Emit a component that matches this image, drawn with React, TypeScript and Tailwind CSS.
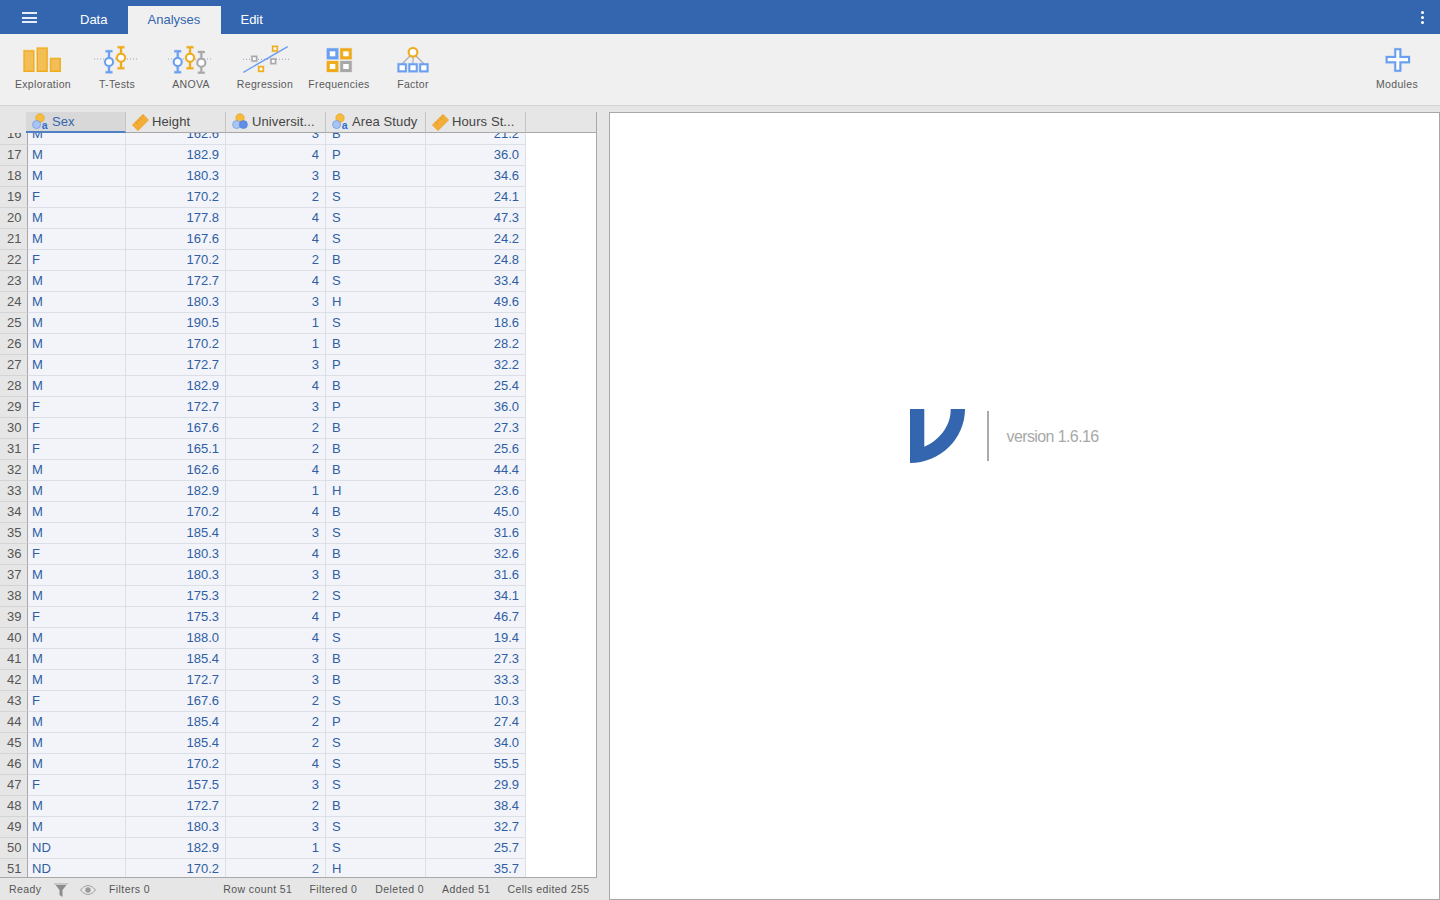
import React from "react";

const data = `16 M 162.6 3 B 21.2
17 M 182.9 4 P 36.0
18 M 180.3 3 B 34.6
19 F 170.2 2 S 24.1
20 M 177.8 4 S 47.3
21 M 167.6 4 S 24.2
22 F 170.2 2 B 24.8
23 M 172.7 4 S 33.4
24 M 180.3 3 H 49.6
25 M 190.5 1 S 18.6
26 M 170.2 1 B 28.2
27 M 172.7 3 P 32.2
28 M 182.9 4 B 25.4
29 F 172.7 3 P 36.0
30 F 167.6 2 B 27.3
31 F 165.1 2 B 25.6
32 M 162.6 4 B 44.4
33 M 182.9 1 H 23.6
34 M 170.2 4 B 45.0
35 M 185.4 3 S 31.6
36 F 180.3 4 B 32.6
37 M 180.3 3 B 31.6
38 M 175.3 2 S 34.1
39 F 175.3 4 P 46.7
40 M 188.0 4 S 19.4
41 M 185.4 3 B 27.3
42 M 172.7 3 B 33.3
43 F 167.6 2 S 10.3
44 M 185.4 2 P 27.4
45 M 185.4 2 S 34.0
46 M 170.2 4 S 55.5
47 F 157.5 3 S 29.9
48 M 172.7 2 B 38.4
49 M 180.3 3 S 32.7
50 ND 182.9 1 S 25.7
51 ND 170.2 2 H 35.7`
  .split("\n")
  .map((l) => l.split(" "));

const B = "#6a9ff0";
const Y = "#efab1a";
const G = "#a8a8a8";

function Pin({ x, y, top, bottom, color }: { x: number; y: number; top: number; bottom: number; color: string }) {
  const d = `M${x - 3.5} ${top}h7M${x - 3.5} ${bottom}h7M${x} ${top}V${y - 3.5}M${x} ${y + 3.5}V${bottom}`;
  return (
    <g fill="none">
      <path d={d} stroke={color} strokeWidth="3.4" opacity="0.22" />
      <circle cx={x} cy={y} r="4" stroke={color} strokeWidth="3" opacity="0.2" />
      <path d={d} stroke={color} strokeWidth="2" />
      <circle cx={x} cy={y} r="4" fill="#fff" stroke={color} strokeWidth="2" />
    </g>
  );
}

function Dots({ x1, x2, y }: { x1: number; x2: number; y: number }) {
  return <path d={`M${x1} ${y}H${x2}`} stroke="#8fa6c8" strokeWidth="1" strokeDasharray="1 2" />;
}

function Exploration() {
  return (
    <svg width="40" height="30" viewBox="0 0 40 30">
      <g fill="#f3be55" stroke={Y} strokeWidth="1.4">
        <rect x="1" y="6.800" width="9.800" height="20.500" />
        <rect x="14.300" y="4" width="9.800" height="23.300" />
        <rect x="27.600" y="14.500" width="9.600" height="12.800" />
      </g>
      <g fill="none" stroke="#f0d48c" strokeWidth="0.7" opacity="0.7">
        <path d="M0 28V6H11M13.500 28V3.300H25M26.800 28V13.800H38" />
      </g>
    </svg>
  );
}
function TTests() {
  return (
    <svg width="48" height="30" viewBox="0 0 48 30">
      <Dots x1={1} x2={46} y={15} />
      <Pin x={16} y={18} top={7.3} bottom={28.3} color={B} />
      <Pin x={28} y={13.7} top={3.3} bottom={24.3} color={Y} />
    </svg>
  );
}
function Anova() {
  return (
    <svg width="48" height="30" viewBox="0 0 48 30">
      <Dots x1={1} x2={46} y={15} />
      <Pin x={10.7} y={18} top={7.3} bottom={28.3} color={B} />
      <Pin x={23} y={13.7} top={3.3} bottom={24.3} color={Y} />
      <Pin x={34.3} y={18.7} top={8} bottom={28.7} color={G} />
    </svg>
  );
}
function Regression() {
  const sq = (x: number, y: number, s: string) => (
    <g>
      <rect x={x - 2.2} y={y - 2.2} width="4.400" height="4.400" fill="#fff" stroke={s} strokeWidth="3" opacity="0.25" />
      <rect x={x - 2.2} y={y - 2.2} width="4.400" height="4.400" fill="#fff" stroke={s} strokeWidth="1.500" />
    </g>
  );
  return (
    <svg width="50" height="30" viewBox="0 0 50 30">
      <Dots x1={3} x2={49} y={15.3} />
      <path d="M3.300 28.300L47.700 2.700" stroke={B} strokeWidth="1.400" />
      {sq(14.3, 14.7, G)}
      {sq(33.3, 17.3, G)}
      {sq(35, 4.7, Y)}
      {sq(21, 25, Y)}
    </svg>
  );
}
function Frequencies() {
  const c = (x: number, y: number, s: string) => (
    <g>
      <rect x={x} y={y} width="8.500" height="8" fill="#fff" stroke={s} strokeWidth="4" opacity="0.25" />
      <rect x={x} y={y} width="8.500" height="8" fill="#fff" stroke={s} strokeWidth="3" />
    </g>
  );
  return (
    <svg width="28" height="30" viewBox="0 0 28 30">
      {c(3.300, 5.800, B)}
      {c(16.700, 5.800, Y)}
      {c(3.300, 18.500, Y)}
      {c(16.700, 18.500, G)}
    </svg>
  );
}
function Factor() {
  const c = (x: number) => (
    <g>
      <rect x={x} y="20.300" width="7.300" height="7" fill="#fff" stroke={B} strokeWidth="3" opacity="0.25" />
      <rect x={x} y="20.300" width="7.300" height="7" fill="#fff" stroke={B} strokeWidth="2" />
    </g>
  );
  return (
    <svg width="36" height="30" viewBox="0 0 36 30">
      <path d="M18 9L7 20M18 9V20M18 9L29 20" stroke={G} strokeWidth="1.100" />
      {c(3.500)}
      {c(14.400)}
      {c(25.200)}
      <circle cx="18" cy="8.300" r="4.300" fill="#fff" stroke={Y} strokeWidth="3" opacity="0.25" />
      <circle cx="18" cy="8.300" r="4.300" fill="#fff" stroke={Y} strokeWidth="2" />
    </svg>
  );
}
function Plus() {
  const d = "M12.300 5.300h5v7.700h8.700v5.300h-8.700v8.400h-5v-8.400H3.700v-5.300h8.600z";
  return (
    <svg width="30" height="30" viewBox="-1 0 30 30">
      <path d={d} fill="#fff" stroke={B} strokeWidth="3" opacity="0.3" />
      <path d={d} fill="#fff" stroke={B} strokeWidth="2" />
    </svg>
  );
}
function Nominal({ ordinal }: { ordinal?: boolean }) {
  return (
    <svg width="17" height="17" viewBox="0 0 17 17" className="-mt-[2px] shrink-0">
      <circle cx="8" cy="5" r="4.200" fill="#f6bc3e" stroke="#dc9a18" strokeWidth="0.600" />
      {ordinal ? (
        <>
          <circle cx="4.600" cy="11.600" r="4" fill="#a8c4f0" stroke="#6f9be6" strokeWidth="0.700" />
          <circle cx="11.400" cy="11.600" r="4" fill="#5f8fe8" stroke="#4a7bd8" strokeWidth="0.600" />
        </>
      ) : (
        <>
          <circle cx="4.600" cy="11.600" r="4" fill="#a8c4f0" stroke="#6f9be6" strokeWidth="0.800" />
          <text x="9.800" y="15.600" fontSize="10.500" fontWeight="700" fill="#2f6fd0" fontFamily="Liberation Sans, sans-serif">
            a
          </text>
        </>
      )}
    </svg>
  );
}
function Ruler() {
  return (
    <svg width="17" height="17" viewBox="0 0 16 16" className="shrink-0">
      <path d="M10.400.300L15.700 5.600 5.600 15.700.300 10.400z" fill="#f3ae3a" stroke="#e89f24" strokeWidth="0.500" />
      <path d="M3.300 7.400l1.800 1.800M5.300 5.400l1.300 1.300M7.300 3.400l1.800 1.800M9.300 1.400l1.300 1.300" stroke="#c98a14" strokeWidth="0.700" />
    </svg>
  );
}

function Tool({ label, children }: { label: string; children: React.ReactNode }) {
  return (
    <div className="flex w-[74px] flex-col items-center">
      <div className="flex h-[30px] items-center justify-center">{children}</div>
      <div className="mt-[4px] whitespace-nowrap text-[10.5px] leading-[13px] tracking-[0.32px] text-[#5a5a5a]">{label}</div>
    </div>
  );
}

function Head({ label, icon, active }: { label: string; icon: React.ReactNode; active?: boolean }) {
  return (
    <div
      className={`flex h-full w-[100px] items-center gap-[3px] border-r border-[#c4c4c4] pl-[6px] text-[13px] tracking-[0.1px] ${
        active
          ? "border-b-2 border-b-[#4f80c4] bg-[#d8d8d8] pt-[1px] text-[#3366ae]"
          : "border-b border-b-[#a8a8a8] text-[#444]"
      }`}
    >
      {icon}
      <span className="whitespace-nowrap">{label}</span>
    </div>
  );
}

export default function App() {
  return (
    <div className="flex h-screen w-full flex-col overflow-hidden bg-[#e6e6e6] font-['Liberation_Sans',sans-serif]">
      <div className="flex h-[34px] shrink-0 items-end bg-[#3366ae] text-[13px] text-white">
        <div className="mb-[11px] ml-[22px] flex w-[15px] flex-col gap-[2.5px]">
          <div className="h-[2px] bg-[#e8eef8]" />
          <div className="h-[2px] bg-[#e8eef8]" />
          <div className="h-[2px] bg-[#e8eef8]" />
        </div>
        <div className="mb-[7px] ml-[43px] leading-[15px]">Data</div>
        <div className="ml-[21px] flex h-[28px] w-[93px] items-center justify-center bg-[#f0f0f0] pr-[2px] text-[#3366ae]">Analyses</div>
        <div className="mb-[7px] ml-[19px] leading-[15px]">Edit</div>
        <div className="mb-[10px] ml-auto mr-[16px] flex flex-col gap-[2px]">
          <div className="h-[3px] w-[3px] rounded-full bg-white" />
          <div className="h-[3px] w-[3px] rounded-full bg-white" />
          <div className="h-[3px] w-[3px] rounded-full bg-white" />
        </div>
      </div>

      <div className="flex h-[72px] shrink-0 border-b border-[#d4d4d4] bg-[#f0f0f0] pl-[6px] pr-[6px] pt-[10px]">
        <Tool label="Exploration"><Exploration /></Tool>
        <Tool label="T-Tests"><TTests /></Tool>
        <Tool label="ANOVA"><Anova /></Tool>
        <Tool label="Regression"><Regression /></Tool>
        <Tool label="Frequencies"><Frequencies /></Tool>
        <Tool label="Factor"><Factor /></Tool>
        <div className="ml-auto"><Tool label="Modules"><Plus /></Tool></div>
      </div>

      <div className="flex min-h-0 flex-1 pt-[6px]">
        <div className="flex w-[597px] shrink-0 flex-col">
          <div className="flex h-[21px] shrink-0 pl-[26px]">
            <Head label="Sex" active icon={<Nominal />} />
            <Head label="Height" icon={<Ruler />} />
            <Head label="Universit..." icon={<Nominal ordinal />} />
            <Head label="Area Study" icon={<Nominal />} />
            <Head label="Hours St..." icon={<Ruler />} />
            <div className="flex-1 border-r border-b border-[#a8a8a8]" />
          </div>
          <div className="min-h-0 flex-1 overflow-hidden border-r border-b border-[#a8a8a8] bg-white">
            <div className="-mt-[9px]">
              {data.map((r) => (
                <div key={r[0]} className="flex h-[21px] text-[13px] leading-[20px] text-[#2f5ea3]">
                  <div className="w-[28px] shrink-0 border-r border-b border-r-[#a8a8a8] border-b-[#d4d4d4] bg-[#e6e6e6] pl-[7px] text-[#555]">{r[0]}</div>
                  <div className="w-[98px] shrink-0 border-r border-b border-[#dcdfe6] bg-[#f3f4f9] pl-[4px]">{r[1]}</div>
                  <div className="w-[100px] shrink-0 border-r border-b border-[#dcdfe6] bg-[#f3f4f9] pr-[6px] text-right">{r[2]}</div>
                  <div className="w-[100px] shrink-0 border-r border-b border-[#dcdfe6] bg-[#f3f4f9] pr-[6px] text-right">{r[3]}</div>
                  <div className="w-[100px] shrink-0 border-r border-b border-[#dcdfe6] bg-[#f3f4f9] pl-[6px]">{r[4]}</div>
                  <div className="w-[100px] shrink-0 border-r border-b border-[#dcdfe6] bg-[#f3f4f9] pr-[6px] text-right">{r[5]}</div>
                </div>
              ))}
            </div>
          </div>
          <div className="flex h-[22px] shrink-0 items-center pt-[2px] text-[10.5px] tracking-[0.42px] text-[#555]">
            <span className="ml-[9px] w-[45px]">Ready</span>
            <svg width="14" height="16" viewBox="0 0 14 16">
              <path d="M0 1h14L8.500 8v7l-3-2V8z" fill="#8c8c8c" />
              <path d="M0 1h14l-1.500 2H1.500z" fill="#c8c8c8" />
            </svg>
            <svg width="16" height="10" viewBox="0 0 16 10" className="ml-[12px]">
              <path d="M.5 5C3 1.800 5.500.6 8 .6s5 1.200 7.500 4.400C13 8.200 10.500 9.400 8 9.400S3 8.200.5 5z" fill="none" stroke="#a0a0a0" />
              <circle cx="8" cy="5" r="2.700" fill="#9a9a9a" />
            </svg>
            <span className="ml-[13px]">Filters 0</span>
            <span className="ml-[73px]">Row count 51</span>
            <span className="ml-[17px]">Filtered 0</span>
            <span className="ml-[18px]">Deleted 0</span>
            <span className="ml-[18px]">Added 51</span>
            <span className="ml-[17px]">Cells edited 255</span>
          </div>
        </div>

        <div className="ml-[12px] flex flex-1 items-start border border-[#a8a8a8] bg-white pl-[300px] pt-[296px]">
          <svg width="55" height="54" viewBox="0 0 55 54" className="shrink-0">
            <path d="M0 0H14.300V37.700C28 32 41 18 40.700 0H55C55 30 30 54 0 54Z" fill="#3366ae" />
          </svg>
          <div className="ml-[22px] mt-[2px] h-[50px] w-[1.500px] bg-[#aaaaaa]" />
          <div className="ml-[18px] mt-[18px] whitespace-nowrap text-[16px] leading-[20px] tracking-[-0.6px] text-[#a8a8a8]">version 1.6.16</div>
        </div>
      </div>
    </div>
  );
}
